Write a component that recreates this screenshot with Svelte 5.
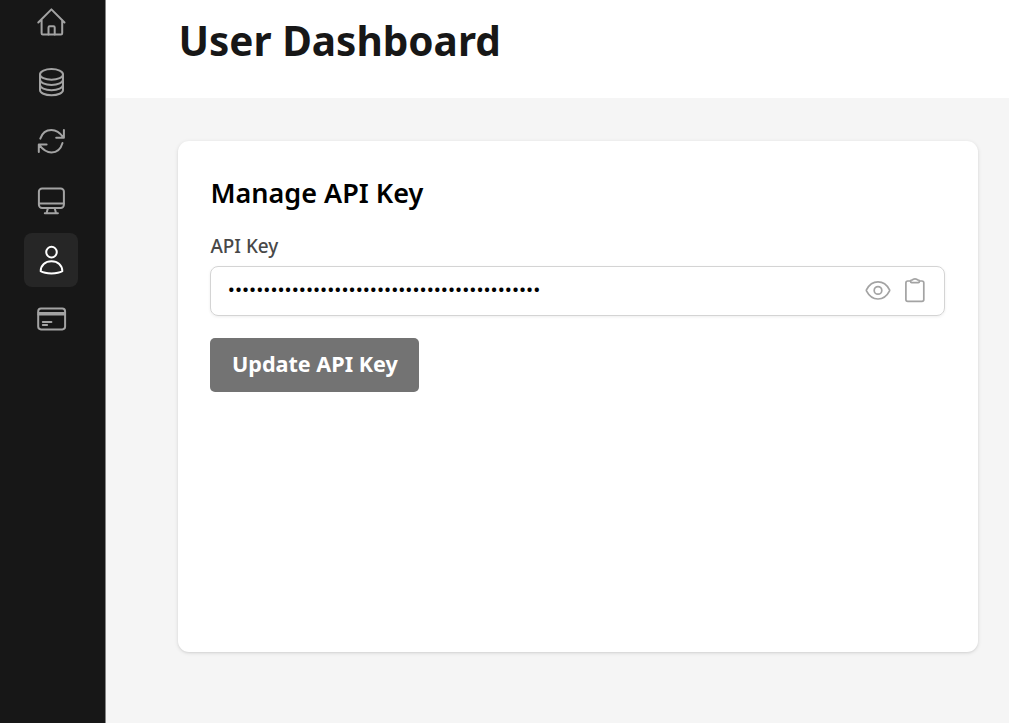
<script>
  const masked = '•'.repeat(44);
  const items = [
    { name: 'Home', icon: 'home' },
    { name: 'Data', icon: 'data' },
    { name: 'Sync', icon: 'sync' },
    { name: 'Monitor', icon: 'monitor' },
    { name: 'User', icon: 'user', active: true },
    { name: 'Billing', icon: 'card' },
  ];
</script>

<div class="page">
  <nav class="sidebar">
    {#each items as item}
      <div class="item" class:active={item.active}>
        <svg width="32" height="32" viewBox="-0.5 0 32 32">
          {#if item.icon === 'home'}
            <path d="M2.8 16.5 15.9 3.4 29 16.5M6.1 14V27.2Q6.1 28.4 7.3 28.4H25.5Q26.7 28.4 26.7 27.2V14" />
            <path d="M13 28.4V21.5Q13 20.3 14.2 20.3H18Q19.2 20.3 19.2 21.5V28.4" />
          {:else if item.icon === 'data'}
            <ellipse cx="16" cy="8.4" rx="11.5" ry="5.4" />
            <path d="M4.5 8.4V24C4.5 27 9.5 29.3 16 29.3S27.5 27 27.5 24V8.4M4.5 13.6C4.5 16.6 9.5 19 16 19S27.5 16.6 27.5 13.6M4.5 18.8C4.5 21.8 9.5 24.2 16 24.2S27.5 21.8 27.5 18.8" />
          {:else if item.icon === 'sync'}
            <path d="M4.8 13.6C6.6 8.2 10.5 5 15.9 5C21 5 24.8 8 27.8 12.4M20.7 12.8H28.4V5.1M27 18C25.4 23.6 21.3 27.4 16 27.4C10.7 27.4 7.1 24.3 3.7 19.8M11.1 19.6H3.3V26.9" />
          {:else if item.icon === 'monitor'}
            <rect x="3.4" y="3.4" width="25" height="19.6" rx="3.2" />
            <path d="M3.6 18.5H28.2M12.4 23.2 11.1 28.1M19.2 23.2 20.5 28.1M9.3 28.2H22.4" />
          {:else if item.icon === 'user'}
            <circle cx="16" cy="8.1" r="5.3" />
            <path d="M5.2 27.2C5.2 21.2 9.7 17.3 16 17.3S26.8 21.2 26.8 27.2C24.2 28.8 20.5 29.4 16 29.4S7.8 28.8 5.2 27.2Z" />
          {:else}
            <rect x="2.7" y="5.6" width="26.9" height="20.8" rx="2.8" />
            <path d="M2.9 10H29.4M2.9 11.5H29.4M7.3 19H15.9M7.3 22H11.6" />
          {/if}
        </svg>
      </div>
    {/each}
  </nav>

  <div class="content">
    <header><h1>User Dashboard</h1></header>
    <main>
      <section class="card">
        <h2>Manage API Key</h2>
        <div class="label">API Key</div>
        <div class="field">
          <span class="secret">{masked}</span>
          <svg class="eye" width="28" height="28" viewBox="0 -0.4 28 28">
            <path d="M2.6 14.8Q2 14 2.6 13.2C5.1 8.3 9.2 5.4 14 5.4S22.9 8.3 25.4 13.2Q26 14 25.4 14.8C22.9 19.7 18.8 22.6 14 22.6S5.1 19.7 2.6 14.8Z" />
            <circle cx="14" cy="14" r="3.8" />
          </svg>
          <svg class="clip" width="28" height="28" viewBox="0 -0.4 28 28">
            <path d="M9.6 4.6H6.8Q4.9 4.6 4.9 6.5V23.1Q4.9 25 6.8 25H20.9Q22.8 25 22.8 23.1V6.5Q22.8 4.6 20.9 4.6H18.4" />
            <path d="M9.6 4.5Q9.6 3.6 10.6 3.6H11.3Q12 2.4 14 2.4T16.7 3.6H17.4Q18.4 3.6 18.4 4.5V5.1Q18.4 6.2 17.3 6.2H10.7Q9.6 6.2 9.6 5.1Z" />
          </svg>
        </div>
        <button>Update API Key</button>
      </section>
    </main>
  </div>
</div>

<style>
  :global(body) { overflow: hidden; }
  .page {
    display: flex;
    height: 723px;
    background: #f5f5f5;
    font-family: "Noto Sans", sans-serif;
    color: #000;
  }
  .sidebar {
    box-sizing: border-box;
    width: 106px;
    flex: none;
    background: #171717;
    border-right: 1px solid #858585;
    display: flex;
    flex-direction: column;
    align-items: center;
    gap: 5.4px;
    height: 728px;
    margin-top: -4.6px;
    padding-right: 2.6px;
  }
  .item {
    width: 54px;
    height: 54px;
    flex: none;
    display: flex;
    align-items: center;
    justify-content: center;
    border-radius: 8px;
    color: #a3a3a3;
  }
  .item.active { background: #262626; color: #fff; }
  svg {
    display: block;
    flex: none;
    fill: none;
    stroke: currentColor;
    stroke-width: 2;
    stroke-linecap: round;
    stroke-linejoin: round;
  }
  .content { flex: 1; display: flex; flex-direction: column; }
  header {
    box-sizing: border-box;
    height: 98px;
    background: #fff;
    padding: 14px 0 0 72.4px;
  }
  h1 {
    margin: 0;
    font-size: 40.5px;
    line-height: 54px;
    font-weight: 700;
    color: #171717;
    white-space: nowrap;
  }
  main { padding: 43px 31.4px 0 72.4px; }
  .card {
    box-sizing: border-box;
    height: 511px;
    padding: 33px 32.2px 0 32px;
    background: #fff;
    border-radius: 11px;
    box-shadow: 0 1px 4px rgba(0, 0, 0, 0.11), 0 1px 2px rgba(0, 0, 0, 0.06);
  }
  h2 {
    margin: 0;
    font-size: 27px;
    line-height: 38px;
    font-weight: 600;
  }
  .label {
    margin-top: 21px;
    font-size: 18.9px;
    line-height: 27px;
    font-weight: 500;
    color: #484848;
  }
  .field {
    box-sizing: border-box;
    height: 50px;
    margin-top: 6px;
    padding: 0 15px 0 16.4px;
    display: flex;
    align-items: center;
    border: 1px solid #d4d4d4;
    border-radius: 8px;
    box-shadow: 0 1px 3px rgba(0, 0, 0, 0.07);
    color: #a3a3a3;
  }
  .field svg { stroke-width: 1.7; margin-bottom: 2px; }
  .secret { flex: 1; color: #000; font-size: 18.9px; line-height: 26px; padding-bottom: 4px; }
  .field .clip { margin-left: 9px; }
  button {
    display: block;
    width: 209px;
    height: 54px;
    margin-top: 22px;
    padding: 0 0 2px;
    border: 0;
    border-radius: 5px;
    background: #737373;
    color: #fff;
    font: 700 21.6px/30px "Noto Sans", sans-serif;
  }
</style>
